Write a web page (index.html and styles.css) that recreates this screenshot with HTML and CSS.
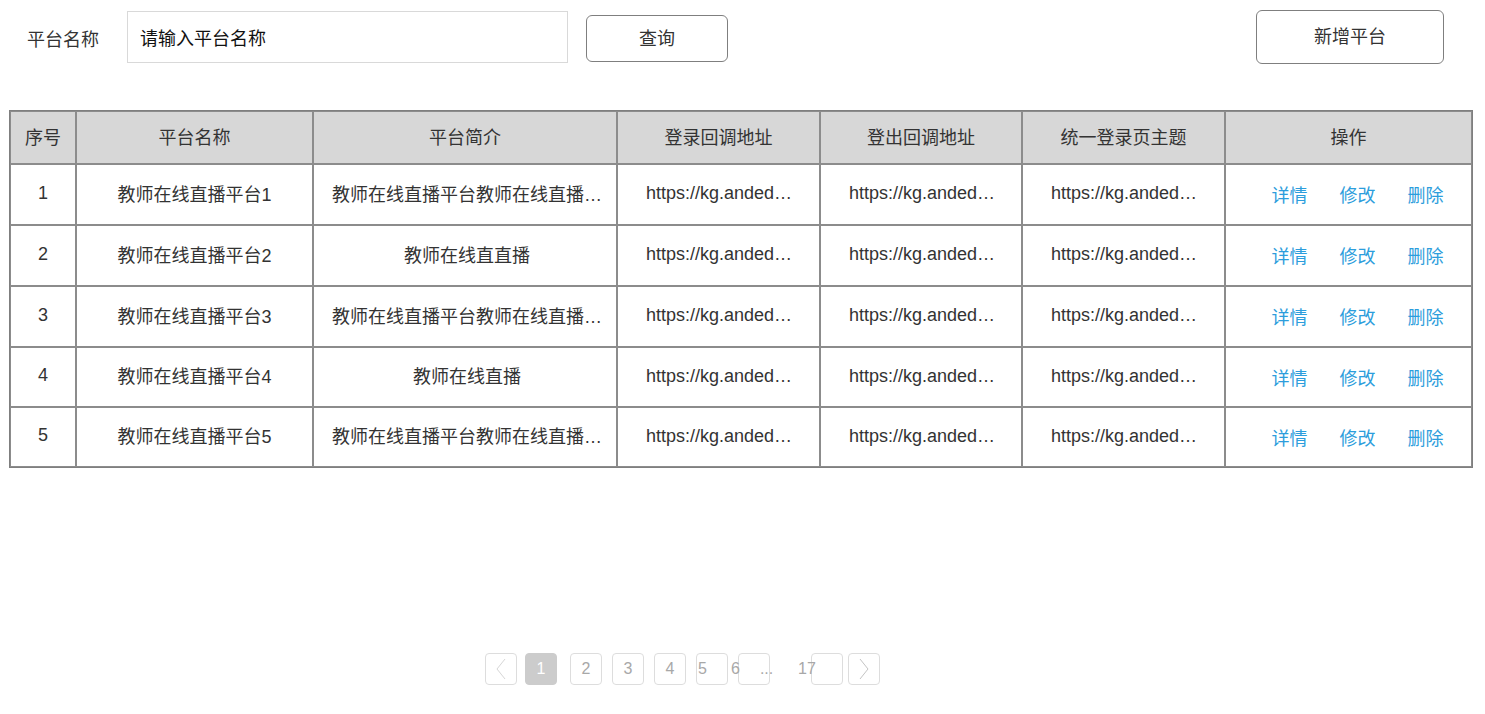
FILE: index.html
```html
<!DOCTYPE html>
<html lang="zh-CN">
<head>
<meta charset="utf-8">
<title>平台管理</title>
<link rel="stylesheet" href="styles.css">
</head>
<body>
<div class="page">
  <div class="toolbar">
    <span class="label">平台名称</span>
    <div class="input">请输入平台名称</div>
    <button class="btn btn-query">查询</button>
    <div class="spacer"></div>
    <button class="btn btn-add">新增平台</button>
  </div>

  <table class="grid">
    <colgroup>
      <col class="c1"><col class="c2"><col class="c3"><col class="c4"><col class="c5"><col class="c6"><col class="c7">
    </colgroup>
    <thead>
      <tr>
        <th>序号</th><th>平台名称</th><th>平台简介</th><th>登录回调地址</th><th>登出回调地址</th><th>统一登录页主题</th><th>操作</th>
      </tr>
    </thead>
    <tbody>
      <tr>
        <td class="num">1</td>
        <td><div class="cut">教师在线直播平台1</div></td>
        <td class="intro"><div class="cut">教师在线直播平台教师在线直播平台教师在线直播</div></td>
        <td class="url"><div class="cut">https://kg.andedu.net/login</div></td>
        <td class="url"><div class="cut">https://kg.andedu.net/logout</div></td>
        <td class="url"><div class="cut">https://kg.andedu.net/theme</div></td>
        <td><div class="ops"><a>详情</a><a>修改</a><a>删除</a></div></td>
      </tr>
      <tr>
        <td class="num">2</td>
        <td><div class="cut">教师在线直播平台2</div></td>
        <td class="intro"><div class="cut">教师在线直直播</div></td>
        <td class="url"><div class="cut">https://kg.andedu.net/login</div></td>
        <td class="url"><div class="cut">https://kg.andedu.net/logout</div></td>
        <td class="url"><div class="cut">https://kg.andedu.net/theme</div></td>
        <td><div class="ops"><a>详情</a><a>修改</a><a>删除</a></div></td>
      </tr>
      <tr>
        <td class="num">3</td>
        <td><div class="cut">教师在线直播平台3</div></td>
        <td class="intro"><div class="cut">教师在线直播平台教师在线直播平台教师在线直播</div></td>
        <td class="url"><div class="cut">https://kg.andedu.net/login</div></td>
        <td class="url"><div class="cut">https://kg.andedu.net/logout</div></td>
        <td class="url"><div class="cut">https://kg.andedu.net/theme</div></td>
        <td><div class="ops"><a>详情</a><a>修改</a><a>删除</a></div></td>
      </tr>
      <tr class="short">
        <td class="num">4</td>
        <td><div class="cut">教师在线直播平台4</div></td>
        <td class="intro"><div class="cut">教师在线直播</div></td>
        <td class="url"><div class="cut">https://kg.andedu.net/login</div></td>
        <td class="url"><div class="cut">https://kg.andedu.net/logout</div></td>
        <td class="url"><div class="cut">https://kg.andedu.net/theme</div></td>
        <td><div class="ops"><a>详情</a><a>修改</a><a>删除</a></div></td>
      </tr>
      <tr class="short">
        <td class="num">5</td>
        <td><div class="cut">教师在线直播平台5</div></td>
        <td class="intro"><div class="cut">教师在线直播平台教师在线直播平台教师在线直播</div></td>
        <td class="url"><div class="cut">https://kg.andedu.net/login</div></td>
        <td class="url"><div class="cut">https://kg.andedu.net/logout</div></td>
        <td class="url"><div class="cut">https://kg.andedu.net/theme</div></td>
        <td><div class="ops"><a>详情</a><a>修改</a><a>删除</a></div></td>
      </tr>
    </tbody>
  </table>

  <div class="pager">
    <span class="pg pg-prev"><svg width="12" height="22" viewBox="0 0 12 22"><path d="M10 1 L2 11 L10 21" fill="none" stroke="#d6d6d6" stroke-width="1"/></svg></span>
    <span class="pg pg-active">1</span>
    <span class="pg pg-2">2</span>
    <span class="pg pg-3">3</span>
    <span class="pg pg-4">4</span>
    <span class="pg pg-5">5</span>
    <span class="pg pg-6"><span class="six">6</span><span class="dots">...</span></span>
    <span class="last">17</span>
    <span class="pg pg-empty"></span>
    <span class="pg pg-next"><svg width="12" height="22" viewBox="0 0 12 22"><path d="M2 1 L10 11 L2 21" fill="none" stroke="#c4c4c4" stroke-width="1"/></svg></span>
  </div>
</div>
</body>
</html>
```

FILE: styles.css
```css
* { box-sizing: border-box; }
html, body { margin: 0; padding: 0; background: #fff; }
body {
  font-family: "Liberation Sans", "Noto Sans CJK SC", sans-serif;
  color: #333;
  font-size: 18px;
}
.page { padding: 10px 13px 0 9px; }

.toolbar {
  display: flex;
  align-items: center;
  height: 54px;
}
.label {
  margin-left: 18px;
  width: 100px;
  font-size: 18px;
  color: #333;
  line-height: 24px;
  margin-top: 6px;
}
.input {
  width: 441px;
  height: 52px;
  border: 1px solid #d9d9d9;
  padding-left: 12px;
  display: flex;
  align-items: center;
  color: #111;
  font-size: 18px;
  margin-top: -1px;
}
.btn {
  font-family: inherit;
  font-size: 18px;
  color: #333;
  background: #fff;
  border: 1px solid #7f7f7f;
  border-radius: 6px;
  padding: 0 0 3px 0;
}
.btn-query {
  margin-left: 18px;
  width: 142px;
  height: 47px;
  margin-top: 3px;
}
.spacer { flex: 1; }
.btn-add {
  width: 188px;
  height: 54px;
  margin-top: -1px;
  margin-right: 28px;
}

.grid {
  margin-top: 46px;
  width: 1464px;
  table-layout: fixed;
  border-collapse: separate;
  border-spacing: 0;
  border: 1px solid #7f7f7f;
}
col.c1 { width: 66px; }
col.c2 { width: 237px; }
col.c3 { width: 304px; }
col.c4 { width: 203px; }
col.c5 { width: 202px; }
col.c6 { width: 203px; }
col.c7 { width: auto; }

.grid th, .grid td {
  border: 1px solid #8c8c8c;
  text-align: center;
  font-weight: normal;
  padding: 0;
  font-size: 18px;
  line-height: 24px;
}
.grid th {
  height: 53px;
  background: #d7d7d7;
  color: #333;
}
.grid td { height: 61px; color: #333; }
.grid tr.short td { height: 60px; }
.grid td.num { padding-bottom: 4px; }
.cut {
  overflow: hidden;
  white-space: nowrap;
  text-overflow: ellipsis;
  padding: 0 18px;
}
.grid td.intro .cut { padding: 0 14px 0 18px; }
.grid td.url .cut { padding: 0 24px 3px 28px; }

.ops {
  display: flex;
  justify-content: center;
  gap: 32px;
  padding-left: 18px;
  padding-top: 3px;
}
.ops a { color: #2c9ddc; cursor: pointer; }

.pager {
  display: flex;
  align-items: center;
  margin-top: 185px;
  padding-left: 476px;
  font-size: 16px;
  color: #a8a8a8;
}
.pg {
  width: 32px;
  height: 32px;
  border: 1px solid #dddddd;
  border-radius: 4px;
  display: flex;
  align-items: center;
  justify-content: center;
  flex: none;
  line-height: 20px;
}
.pg-prev { margin-right: 8px; }
.pg-active { background: #cccccc; border-color: #cccccc; color: #fff; margin-right: 13px; }
.pg-2 { margin-right: 10px; }
.pg-3 { margin-right: 10px; }
.pg-4 { margin-right: 10px; }
.pg-5 { justify-content: flex-start; padding-left: 1px; margin-right: 10px; }
.pg-6 { justify-content: flex-start; }
.six { margin-left: -8px; }
.dots { margin-left: 20px; font-size: 16px; }
.last { margin-left: 28px; margin-right: -5px; position: relative; z-index: 1; }
.pg-empty { margin-right: 5px; }
```
